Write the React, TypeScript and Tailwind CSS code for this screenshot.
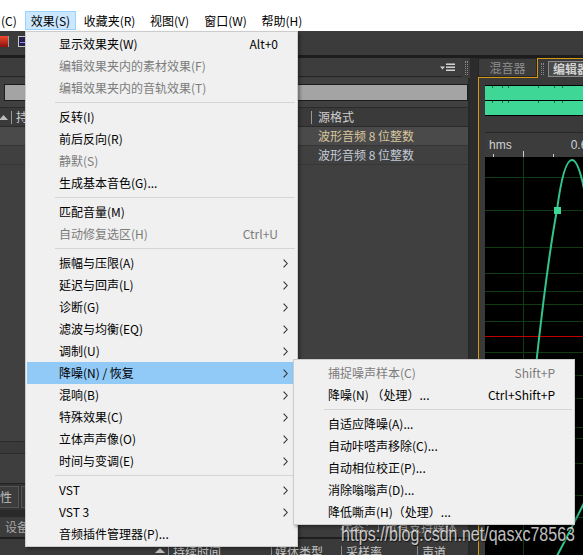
import React from "react";

type Item = {
  label: string;
  shortcut?: string;
  disabled?: boolean;
  sub?: boolean;
  active?: boolean;
};

const SEP = "sep" as const;
type Entry = Item | typeof SEP;

const effectsMenu: Entry[] = [
  { label: "显示效果夹(W)", shortcut: "Alt+0" },
  { label: "编辑效果夹内的素材效果(F)", disabled: true },
  { label: "编辑效果夹内的音轨效果(T)", disabled: true },
  SEP,
  { label: "反转(I)" },
  { label: "前后反向(R)" },
  { label: "静默(S)", disabled: true },
  { label: "生成基本音色(G)..." },
  SEP,
  { label: "匹配音量(M)" },
  { label: "自动修复选区(H)", shortcut: "Ctrl+U", disabled: true },
  SEP,
  { label: "振幅与压限(A)", sub: true },
  { label: "延迟与回声(L)", sub: true },
  { label: "诊断(G)", sub: true },
  { label: "滤波与均衡(EQ)", sub: true },
  { label: "调制(U)", sub: true },
  { label: "降噪(N) / 恢复", sub: true, active: true },
  { label: "混响(B)", sub: true },
  { label: "特殊效果(C)", sub: true },
  { label: "立体声声像(O)", sub: true },
  { label: "时间与变调(E)", sub: true },
  SEP,
  { label: "VST", sub: true },
  { label: "VST 3", sub: true },
  { label: "音频插件管理器(P)..." },
];

const noiseMenu: Entry[] = [
  { label: "捕捉噪声样本(C)", shortcut: "Shift+P", disabled: true },
  { label: "降噪(N) （处理）...", shortcut: "Ctrl+Shift+P" },
  SEP,
  { label: "自适应降噪(A)..." },
  { label: "自动咔嗒声移除(C)..." },
  { label: "自动相位校正(P)..." },
  { label: "消除嗡嗡声(D)..." },
  { label: "降低嘶声(H)（处理）..." },
];

const gridLines = [20, 53, 90, 116, 134, 147, 164, 195, 218, 241, 270, 281, 306, 338, 360];
const laneTicks = [7, 17, 23, 53, 69, 77];

function Chevron() {
  return (
    <svg width="5" height="9" viewBox="0 0 5 9" className="block">
      <path d="M0.6 0.6 L4.2 4.5 L0.6 8.4" fill="none" stroke="#333" strokeWidth="1.1" />
    </svg>
  );
}

function Menu({ entries, gutter, sepInset }: { entries: Entry[]; gutter: string; sepInset: string }) {
  return (
    <div className="flex flex-col">
      {entries.map((e, i) => {
        if (e === SEP)
          return (
            <div key={i} className={`flex h-[7px] items-center ${sepInset} mr-[2px]`}>
              <div className="h-px w-full bg-[#d5d5d5]" />
            </div>
          );
        return (
          <div
            key={i}
            className={`mx-[1px] flex h-[22px] items-center ${e.active ? "bg-[#91c9f7]" : ""} ${e.disabled ? "text-[#7c7c7c]" : "text-black"}`}
          >
            <span className={`flex-1 whitespace-nowrap ${gutter}`}>{e.label}</span>
            {e.shortcut && <span className="whitespace-nowrap">{e.shortcut}</span>}
            <span className="flex w-[18px] items-center pl-[5px]">{e.sub && <Chevron />}</span>
          </div>
        );
      })}
    </div>
  );
}

function Gripper({ h }: { h: string }) {
  return <div className={`w-[3px] ${h} border-x border-dotted border-[#8a8a8a]`} />;
}

export default function App() {
  return (
    <div className="relative h-[555px] w-[583px] overflow-hidden bg-[#3b3b3b] font-['Noto_Sans_CJK_SC',sans-serif] text-[12px] leading-none">
      {/* menubar */}
      <div className="flex h-[31px] items-start bg-white pt-[11px] text-black">
        <span className="flex h-[19px] w-[25px] items-center pl-[1px]">(C)</span>
        <span className="flex h-[19px] w-[51px] items-center justify-center border border-[#99d1ff] bg-[#cce8ff]">效果(S)</span>
        <span className="ml-[2px] flex h-[19px] w-[63px] items-center justify-center">收藏夹(R)</span>
        <span className="ml-[3px] flex h-[19px] w-[51px] items-center justify-center">视图(V)</span>
        <span className="ml-[3px] flex h-[19px] w-[55px] items-center justify-center">窗口(W)</span>
        <span className="ml-[3px] flex h-[19px] w-[52px] items-center justify-center">帮助(H)</span>
      </div>

      {/* toolbar */}
      <div className="flex h-[24px] items-start gap-[9px] bg-[#3b3b3b] pt-[5px]">
        <div className="h-[11px] w-[9px] border-r border-[#999] bg-gradient-to-b from-[#f04a2a] to-[#8a0f0f]" />
        <div className="flex h-[11px] w-[10px] items-center justify-center border border-[#c8c8c8] bg-[#24244a]">
          <div className="h-[3px] w-[6px] border-b border-[#9b7cff]" />
        </div>
      </div>
      <div className="h-[3px] bg-[#1d1d1d]" />

      <div className="flex h-[497px]">
        {/* files panel */}
        <div className="flex w-[470px] flex-col">
          <div className="flex h-[20px]">
            <div className="flex h-[19px] w-[462px] items-center justify-end border-b border-[#262626] bg-[#3d3d3d] pr-[6px]">
              <svg width="16" height="9" viewBox="0 0 16 9">
                <polygon points="0,3.5 5,3.5 2.5,6.5" fill="#d0d0d0" />
                <rect x="6" y="0.5" width="9" height="1.4" fill="#e0e0e0" />
                <rect x="6" y="3.5" width="9" height="1.4" fill="#e0e0e0" />
                <rect x="6" y="6.5" width="9" height="1.4" fill="#e0e0e0" />
              </svg>
            </div>
            <div className="flex w-[8px] justify-center pt-[3px]">
              <Gripper h="h-[14px]" />
            </div>
          </div>
          <div className="flex flex-1 flex-col border-r-2 border-[#282828] bg-[#404040]">
            <div className="mt-[6px] ml-[4px] h-[17px] border border-[#1c1c1c] bg-[#a4a4a4]" />
            <div className="mt-[6px] flex h-[20px] items-center border-y border-[#2a2a2a] bg-[#3a3a3a] text-[#cfcfcf]">
              <div className="flex w-[311px] items-center">
                <svg width="9" height="5" viewBox="0 0 9 5" className="ml-[-1px]">
                  <polygon points="0,5 4.5,0 9,5" fill="#bdbdbd" />
                </svg>
                <div className="ml-[3px] h-[13px] w-px bg-[#999]" />
                <span className="ml-[4px]">持续时间</span>
              </div>
              <div className="h-[13px] w-px bg-[#999]" />
              <span className="ml-[6px]">源格式</span>
            </div>
            <div className="flex h-[19px] items-center border-b border-[#363636] bg-[#4a4a4a] pl-[318px] text-[#d9c69e]">
              波形音频 8 位整数
            </div>
            <div className="flex h-[19px] items-center border-b border-[#363636] pl-[318px] text-[#c4cbd7]">
              波形音频 8 位整数
            </div>
            <div className="flex-1" />
            <div className="h-[12px] border-t border-[#2a2a2a] bg-[#3a3a3a]" />
            <div className="h-[30px] border-t border-[#2a2a2a] bg-[#3e3e3e]" />
            <div className="flex h-[27px] items-end gap-[2px] border-t border-[#222] bg-[#333] pb-[2px]">
              <div className="-ml-[14px] flex h-[22px] w-[33px] items-center justify-end border border-[#555] bg-[#3c3c3c] pr-[6px] text-[#bdbdbd]">
                属性
              </div>
              <div className="h-[22px] w-[40px] border border-[#555] bg-[#3a3a3a]" />
            </div>
            <div className="h-[7px] bg-[#2a2a2a]" />
            <div className="flex h-[20px] items-center bg-[#3c3c3c] text-[#a8a8a8]">
              <span className="ml-[5px] w-[335px]">设备</span>
              <span className="w-[38px]">状态：</span>
              <div className="h-[12px] w-px bg-[#777]" />
              <span className="ml-[6px]">所有支持媒体</span>
            </div>
            <div className="h-[2px] bg-[#1e1e1e]" />
            <div className="flex h-[16px] items-start bg-[#3a3a3a] pt-[7px] text-[#c8c8c8]">
              <div className="w-[155px]" />
              <svg width="10" height="5" viewBox="0 0 10 5" className="mt-[2px]">
                <polygon points="0,5 5,0 10,5" fill="#bdbdbd" />
              </svg>
              <div className="ml-[3px] h-[10px] w-px bg-[#888]" />
              <span className="ml-[4px] w-[98px]">持续时间</span>
              <div className="h-[10px] w-px bg-[#888]" />
              <span className="ml-[3px] w-[66px] overflow-hidden whitespace-nowrap">媒体类型</span>
              <div className="h-[10px] w-px bg-[#888]" />
              <span className="ml-[4px] w-[71px]">采样率</span>
              <div className="h-[10px] w-px bg-[#888]" />
              <span className="ml-[4px]">声道</span>
            </div>
          </div>
        </div>

        <div className="w-[8px] bg-[#2c2c2c]" />

        {/* editor panel */}
        <div className="flex w-[105px] flex-col">
          <div className="flex h-[20px]">
            <div className="w-[59px] border-b border-[#d9960f]">
              <div className="flex h-[19px] items-center justify-center border border-[#262626] bg-[#3c3c3c] text-[#8e8e8e]">
                混音器
              </div>
            </div>
            <div className="flex flex-1 items-center overflow-hidden border-l border-t border-[#d9960f] bg-[#3a3a3a]">
              <div className="ml-[3px]">
                <Gripper h="h-[12px]" />
              </div>
              <div className="ml-[4px] flex h-[16px] shrink-0 items-center border border-[#8a8a8a] bg-[#4a4a4a] px-[4px] font-bold text-[#d2d2d2]">
                编辑器
              </div>
            </div>
          </div>
          <div className="flex flex-1 flex-col border-l border-[#d9960f] bg-[#3a3a3a] pt-[7px] pl-[6px]">
            <div className="flex h-[31px] flex-col gap-px bg-black py-px">
              {[0, 1].map((lane) => (
                <div key={lane} className="relative h-[14px] bg-[#3fd796]">
                  <svg width="98" height="3" className="block">
                    {laneTicks.map((x) => (
                      <rect key={x} x={x} y="0" width="1" height="2" fill="#1c6a45" />
                    ))}
                  </svg>
                </div>
              ))}
            </div>
            <div className="mt-[16px] flex h-[25px] flex-col border-t border-[#262626] bg-[#3c3c3c] text-[#d2d2d2]">
              <div className="flex pt-[6px] font-['Liberation_Sans',sans-serif] text-[12px]">
                <span className="ml-[4px]">hms</span>
                <span className="ml-[59px] whitespace-nowrap">0.6</span>
              </div>
              <svg width="98" height="6" className="mt-auto block">
                <rect x="8" y="3" width="1" height="3" fill="#cfcfcf" />
                <rect x="38" y="0" width="1" height="6" fill="#cfcfcf" />
                <rect x="68" y="3" width="1" height="3" fill="#cfcfcf" />
              </svg>
            </div>
            <div className="flex-1 bg-black">
              <svg width="98" height="398" viewBox="0 0 98 398" className="block">
                {gridLines.map((y) => (
                  <line key={y} x1="0" x2="98" y1={y + 0.5} y2={y + 0.5} stroke="#0f3a12" strokeWidth="1" />
                ))}
                <line x1="38.5" x2="38.5" y1="0" y2="398" stroke="#0f3a12" strokeWidth="1" />
                <line x1="0" x2="98" y1="179.5" y2="179.5" stroke="#c00000" strokeWidth="1" />
                <path
                  d="M45 270 C52 190, 64 95, 72 53 C75 30, 80 3, 87 3 C92 3, 96 17, 99 32"
                  fill="none"
                  stroke="#33c58c"
                  strokeWidth="2"
                />
                <path d="M66 410 C75 394, 86 372, 100 344" fill="none" stroke="#33c58c" strokeWidth="2" />
                <rect x="69" y="50" width="7" height="7" fill="#3fd796" />
              </svg>
            </div>
          </div>
        </div>
      </div>

      {/* effects menu */}
      <div className="absolute top-[31px] left-[25px] w-[273px] border border-[#cccccc] bg-[#f0f0f0] py-[1px] shadow-[2px_2px_3px_rgba(0,0,0,0.35)]">
        <Menu entries={effectsMenu} gutter="pl-[32px]" sepInset="ml-[29px]" />
      </div>

      {/* noise reduction submenu */}
      <div className="absolute top-[359px] left-[293px] w-[282px] border border-[#cccccc] bg-[#f0f0f0] pt-[2px] pb-[1px] shadow-[2px_2px_3px_rgba(0,0,0,0.35)]">
        <Menu entries={noiseMenu} gutter="pl-[33px]" sepInset="ml-[30px]" />
      </div>

      <div className="absolute top-[524px] left-[341px] origin-left scale-x-80 font-['Liberation_Sans',sans-serif] text-[20px] leading-[20px] whitespace-nowrap text-white/75 [text-shadow:1px_1px_1px_rgba(0,0,0,0.7)]">
        https://blog.csdn.net/qasxc78563
      </div>
    </div>
  );
}
